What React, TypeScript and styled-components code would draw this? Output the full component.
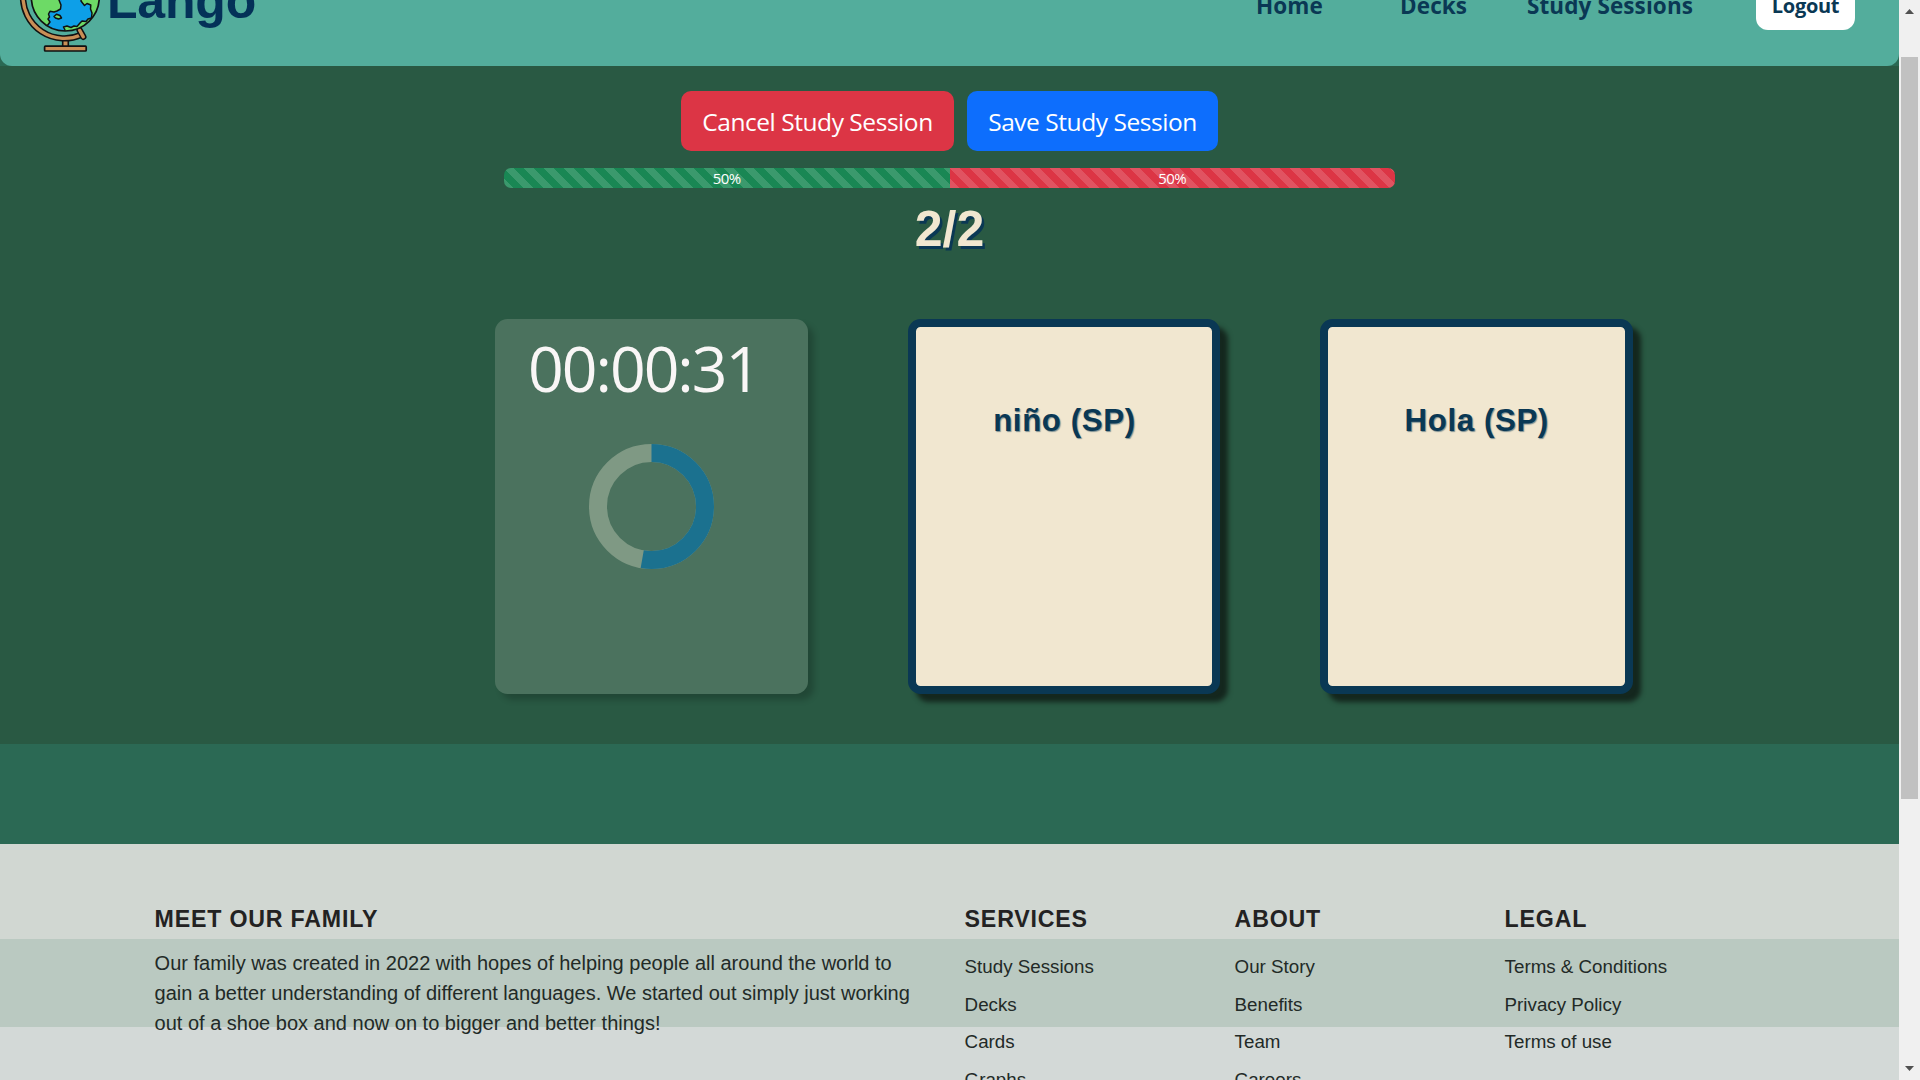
import React from 'react';
import styled, { createGlobalStyle } from 'styled-components';

const navy = '#0a3854';
const cream = '#f1e7d0';
const sans = `"Liberation Sans", Arial, sans-serif`;
const ui = `"Open Sans", "Noto Sans", sans-serif`;

const GlobalStyle = createGlobalStyle`
  * { box-sizing: border-box; }
  body { margin: 0; background: #2b6954; overflow: hidden; }
`;

const Viewport = styled.div`
  display: flex;
  width: 1920px;
  height: 1080px;
  overflow: hidden;
`;

const Page = styled.div`
  flex: 0 0 1899px;
  display: flex;
  flex-direction: column;
  background: #2b6954;
  overflow: hidden;
`;

const Header = styled.header`
  flex: 0 0 66px;
  display: flex;
  justify-content: space-between;
  align-items: flex-end;
  height: 66px;
  padding: 0 44px 0 19px;
  background: #53ad9c;
  border-radius: 0 0 12px 12px;
  overflow: hidden;
`;

const Brand = styled.div`
  display: flex;
  align-items: flex-end;
  color: #043158;
`;

const Globe = styled.svg`
  display: block;
  width: 84px;
  height: 100px;
  margin-bottom: 14px;
`;

const BrandName = styled.span`
  margin: 0 0 35px 4px;
  font: 700 50px/60px ${sans};
  letter-spacing: -0.2px;
`;

const Nav = styled.nav`
  display: flex;
  align-items: flex-end;
  margin-bottom: 36px;
`;

const NavLink = styled.a<{ $gap: number; $width: number }>`
  width: ${(p) => p.$width}px;
  margin-right: ${(p) => p.$gap}px;
  margin-bottom: 9px;
  color: ${navy};
  font: 700 22.5px/30px ${ui};
  white-space: nowrap;
  letter-spacing: 0.1px;
`;

const Logout = styled.button`
  width: 99px;
  height: 52px;
  padding: 4px 0 0;
  border: 0;
  border-radius: 12px;
  background: #fff;
  color: ${navy};
  font: 700 20px/28px ${ui};
  letter-spacing: -0.3px;
`;

const Main = styled.main`
  flex: 0 0 678px;
  display: flex;
  flex-direction: column;
  align-items: center;
  padding-top: 25px;
  background: #295943;
`;

const Actions = styled.div`
  display: flex;
  gap: 13px;
`;

const Action = styled.button<{ $bg: string; $width: number }>`
  width: ${(p) => p.$width}px;
  height: 60px;
  padding: 2px 0 0;
  border: 0;
  border-radius: 10px;
  background: ${(p) => p.$bg};
  color: #fff;
  font: 400 24.5px/36px ${ui};
  letter-spacing: -0.45px;
  white-space: nowrap;
`;

const Progress = styled.div`
  display: flex;
  width: 891px;
  height: 20px;
  margin-top: 17px;
  border-radius: 7px;
  overflow: hidden;
`;

const Bar = styled.div<{ $bg: string }>`
  flex: 1;
  color: #fff;
  text-align: center;
  font: 400 15px/20px ${ui};
  letter-spacing: -0.5px;
  background: ${(p) => p.$bg}
    linear-gradient(45deg, rgba(255,255,255,.15) 25%, transparent 25%, transparent 50%, rgba(255,255,255,.15) 50%, rgba(255,255,255,.15) 75%, transparent 75%, transparent)
    0 0 / 20px 20px;
`;

const Counter = styled.h1`
  margin: 11px 0 0;
  color: ${cream};
  font: 700 50px/60px ${sans};
  text-shadow: 2.5px 2.5px 0 ${navy};
`;

const Cards = styled.div`
  display: flex;
  gap: 99.6px;
  width: 100%;
  margin-top: 60px;
  padding-left: 495px;
`;

const TimerCard = styled.section`
  display: flex;
  flex-direction: column;
  width: 313px;
  height: 375px;
  border-radius: 12.5px;
  background: #4b725e;
  box-shadow: 6px 6px 6px rgba(0, 0, 0, 0.2);
`;

const Time = styled.div`
  margin: 7px 0 0 33px;
  color: #f9f6f6;
  font: 400 62.5px/84px ${ui};
  letter-spacing: -2px;
`;

const Ring = styled.svg`
  display: block;
  width: 125px;
  height: 125px;
  margin: 34px 0 0 94px;
`;

const WordCard = styled.section`
  width: 312.7px;
  height: 375px;
  padding: 75px 0 0 1px;
  border: 8px solid ${navy};
  border-radius: 12.5px;
  background: ${cream};
  color: ${navy};
  text-align: center;
  font: 700 31.25px/38px ${sans};
  letter-spacing: 0.6px;
  text-shadow: 1px 1px 1px rgba(10, 56, 84, 0.5);
  box-shadow: 8px 8px 5px #14271e;
`;

const Footer = styled.footer`
  flex: 0 0 236px;
  display: flex;
  margin-top: 100px;
  padding: 56px 0 0 154.6px;
  background: linear-gradient(#d1d7d2 0 95px, #bac9c1 95px 183px, #d3d9d7 183px);
  overflow: hidden;
  font-family: ${sans};
`;

const Column = styled.section<{ $width: number }>`
  flex: 0 0 ${(p) => p.$width}px;
`;

const Heading = styled.h6`
  margin: 0;
  color: #232222;
  font: 700 23.2px/38px ${sans};
  letter-spacing: 0.8px;
`;

const About = styled.p`
  width: 775px;
  margin: 10px 0 0;
  color: #222a27;
  font-size: 20px;
  line-height: 30px;
`;

const Links = styled.ul`
  margin: 10px 0 0;
  padding: 0;
  list-style: none;
`;

const Item = styled.li`
  height: 37.5px;
  color: #222a27;
  font-size: 18.75px;
  line-height: 37.5px;
`;

const Scrollbar = styled.div`
  flex: 0 0 21px;
  display: flex;
  flex-direction: column;
  align-items: center;
  background: #f0f0f0;
`;

const Arrow = styled.svg`
  display: block;
  width: 17px;
  height: 21px;
`;

const Thumb = styled.div`
  width: 17px;
  height: 742px;
  margin: 36px 0 auto;
  background: #c1c1c1;
`;

const columns = [
  { title: 'SERVICES', links: ['Study Sessions', 'Decks', 'Cards', 'Graphs'] },
  { title: 'ABOUT', links: ['Our Story', 'Benefits', 'Team', 'Careers'] },
  { title: 'LEGAL', links: ['Terms & Conditions', 'Privacy Policy', 'Terms of use'] },
];

function GlobeLogo() {
  return (
    <Globe viewBox="19 -48 84 100" strokeLinejoin="round" strokeLinecap="round">
      <defs>
        <clipPath id="sphere"><circle cx="65.3" cy="-3" r="34" /></clipPath>
      </defs>
      <rect x="62.7" y="38" width="5.6" height="9" fill="#c98f56" stroke="#111" strokeWidth="1.6" />
      <path d="M23 -3 A41.5 41.5 0 0 0 81 35" fill="none" stroke="#111" strokeWidth="6.4" />
      <path d="M23 -3 A41.5 41.5 0 0 0 81 35" fill="none" stroke="#c98f56" strokeWidth="3.4" />
      <path d="M79.5 30 L83.3 36.8" stroke="#111" strokeWidth="6.4" />
      <path d="M79.5 30 L83.3 36.8" stroke="#c98f56" strokeWidth="3.4" />
      <rect x="44.6" y="46.2" width="41.6" height="4.8" rx="0.8" fill="#c98f56" stroke="#111" strokeWidth="1.7" />
      <circle cx="65.3" cy="-3" r="34" fill="#6dda66" />
      <g clipPath="url(#sphere)" stroke="#111" strokeWidth="1.5">
        <path
          d="M58 -6 L59 0 L61 5 L60.5 9 L57 11 L54 12 L50 11.3 L48.5 14 L49.5 17 L48 19 L50 22 L47 26 L50 32 L64 33 L65 30 L63.5 27 L67 26 L71 27.5 L74 26 L77 26.5 L80 23 L82 21 L86 21.5 L88 19 L91.5 18 L92 13 L90.5 9 L90.8 5 L87 3.5 L84.5 5.5 L82.5 3 L81 1 L82 -6Z"
          fill="#0d9fe8"
        />
        <path d="M54 16.5 L56.5 14.2 L60 15.5 L61.5 18 L58.5 19 L55.5 18Z" fill="#6dda66" />
      </g>
      <circle cx="65.3" cy="-3" r="34" fill="none" stroke="#111" strokeWidth="1.7" />
    </Globe>
  );
}

export default function App() {
  return (
    <Viewport>
      <GlobalStyle />
      <Page>
        <Header>
          <Brand>
            <GlobeLogo />
            <BrandName>Lango</BrandName>
          </Brand>
          <Nav>
            <NavLink $width={68} $gap={76}>Home</NavLink>
            <NavLink $width={65} $gap={62}>Decks</NavLink>
            <NavLink $width={166} $gap={63}>Study Sessions</NavLink>
            <Logout>Logout</Logout>
          </Nav>
        </Header>
        <Main>
          <Actions>
            <Action $bg="#dc3545" $width={273}>Cancel Study Session</Action>
            <Action $bg="#0d6efd" $width={251}>Save Study Session</Action>
          </Actions>
          <Progress>
            <Bar $bg="#198754">50%</Bar>
            <Bar $bg="#dc3545">50%</Bar>
          </Progress>
          <Counter>2/2</Counter>
          <Cards>
            <TimerCard>
              <Time>00:00:31</Time>
              <Ring viewBox="0 0 125 125">
                <circle cx="62.5" cy="62.5" r="53.5" fill="none" stroke="#7f9984" strokeWidth="18" />
                <circle cx="62.5" cy="62.5" r="53.5" fill="none" stroke="#1b718f" strokeWidth="18" pathLength="360" strokeDasharray="190 170" transform="rotate(-90 62.5 62.5)" />
              </Ring>
            </TimerCard>
            <WordCard>niño (SP)</WordCard>
            <WordCard>Hola (SP)</WordCard>
          </Cards>
        </Main>
        <Footer>
          <Column $width={810}>
            <Heading>MEET OUR FAMILY</Heading>
            <About>
              Our family was created in 2022 with hopes of helping people all around the world to
              gain a better understanding of different languages. We started out simply just working
              out of a shoe box and now on to bigger and better things!
            </About>
          </Column>
          {columns.map((c) => (
            <Column key={c.title} $width={270}>
              <Heading>{c.title}</Heading>
              <Links>
                {c.links.map((l) => <Item key={l}>{l}</Item>)}
              </Links>
            </Column>
          ))}
        </Footer>
      </Page>
      <Scrollbar>
        <Arrow viewBox="0 0 17 21"><path d="M4 14 L8.5 9 L13 14Z" fill="#505050" /></Arrow>
        <Thumb />
        <Arrow viewBox="0 0 17 21"><path d="M4 7 L8.5 12 L13 7Z" fill="#505050" /></Arrow>
      </Scrollbar>
    </Viewport>
  );
}
